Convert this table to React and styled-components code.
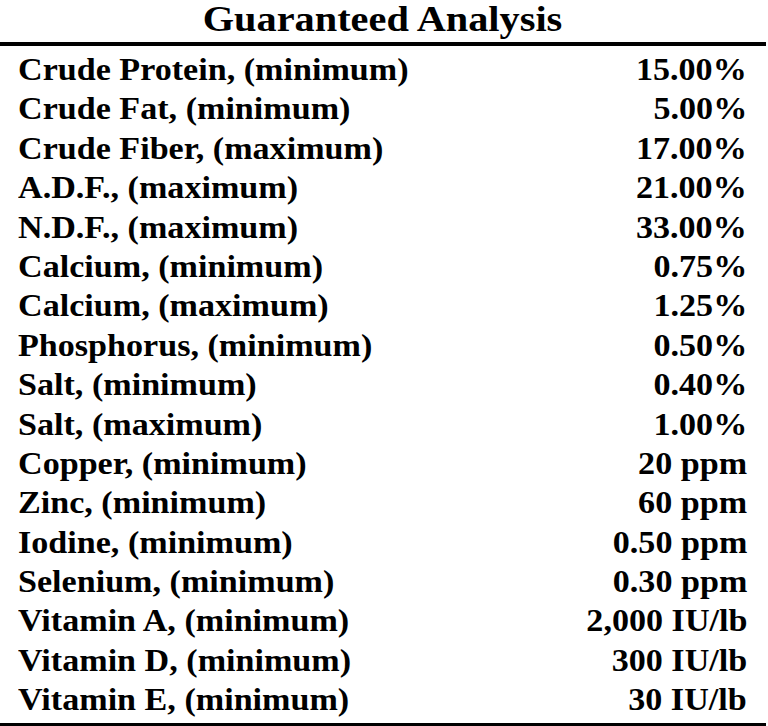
import React from "react";
import styled, { createGlobalStyle } from "styled-components";

const Global = createGlobalStyle`
  html, body { margin: 0; padding: 0; background: #ffffff; overflow: hidden; }
  body { font-family: "Liberation Serif", "Times New Roman", serif; color: #000; }
`;

const Panel = styled.div`
  width: 766px;
  display: flex;
  flex-direction: column;
`;

const Title = styled.h1`
  margin: 0;
  height: 42px;
  box-sizing: border-box;
  padding: 2px 0 0;
  font-size: 36px;
  line-height: 34px;
  font-weight: 700;
  text-align: center;
  white-space: nowrap;
`;

const TitleText = styled.span`
  display: inline-block;
  transform: scaleX(1.12);
  transform-origin: center center;
`;

const Table = styled.div`
  border-top: 4px solid #000;
  border-bottom: 4px solid #000;
  padding: 4px 19px 3px 18px;
  display: flex;
  flex-direction: column;
`;

const Row = styled.div`
  display: flex;
  justify-content: space-between;
  align-items: baseline;
  height: 39.4px;
  font-size: 31px;
  line-height: 39.4px;
  font-weight: 700;
  white-space: nowrap;
`;

const Label = styled.span`
  display: inline-block;
  transform: scaleX(1.1);
  transform-origin: left center;
`;

const Value = styled.span`
  display: inline-block;
  transform: scaleX(1.1);
  transform-origin: right center;
`;

const rows = [
  ["Crude Protein, (minimum)", "15.00%"],
  ["Crude Fat, (minimum)", "5.00%"],
  ["Crude Fiber, (maximum)", "17.00%"],
  ["A.D.F., (maximum)", "21.00%"],
  ["N.D.F., (maximum)", "33.00%"],
  ["Calcium, (minimum)", "0.75%"],
  ["Calcium, (maximum)", "1.25%"],
  ["Phosphorus, (minimum)", "0.50%"],
  ["Salt, (minimum)", "0.40%"],
  ["Salt, (maximum)", "1.00%"],
  ["Copper, (minimum)", "20 ppm"],
  ["Zinc, (minimum)", "60 ppm"],
  ["Iodine, (minimum)", "0.50 ppm"],
  ["Selenium, (minimum)", "0.30 ppm"],
  ["Vitamin A, (minimum)", "2,000 IU/lb"],
  ["Vitamin D, (minimum)", "300 IU/lb"],
  ["Vitamin E, (minimum)", "30 IU/lb"],
];

export default function App() {
  return (
    <>
      <Global />
      <Panel>
        <Title>
          <TitleText>Guaranteed Analysis</TitleText>
        </Title>
        <Table>
          {rows.map(([label, value]) => (
            <Row key={label}>
              <Label>{label}</Label>
              <Value>{value}</Value>
            </Row>
          ))}
        </Table>
      </Panel>
    </>
  );
}
